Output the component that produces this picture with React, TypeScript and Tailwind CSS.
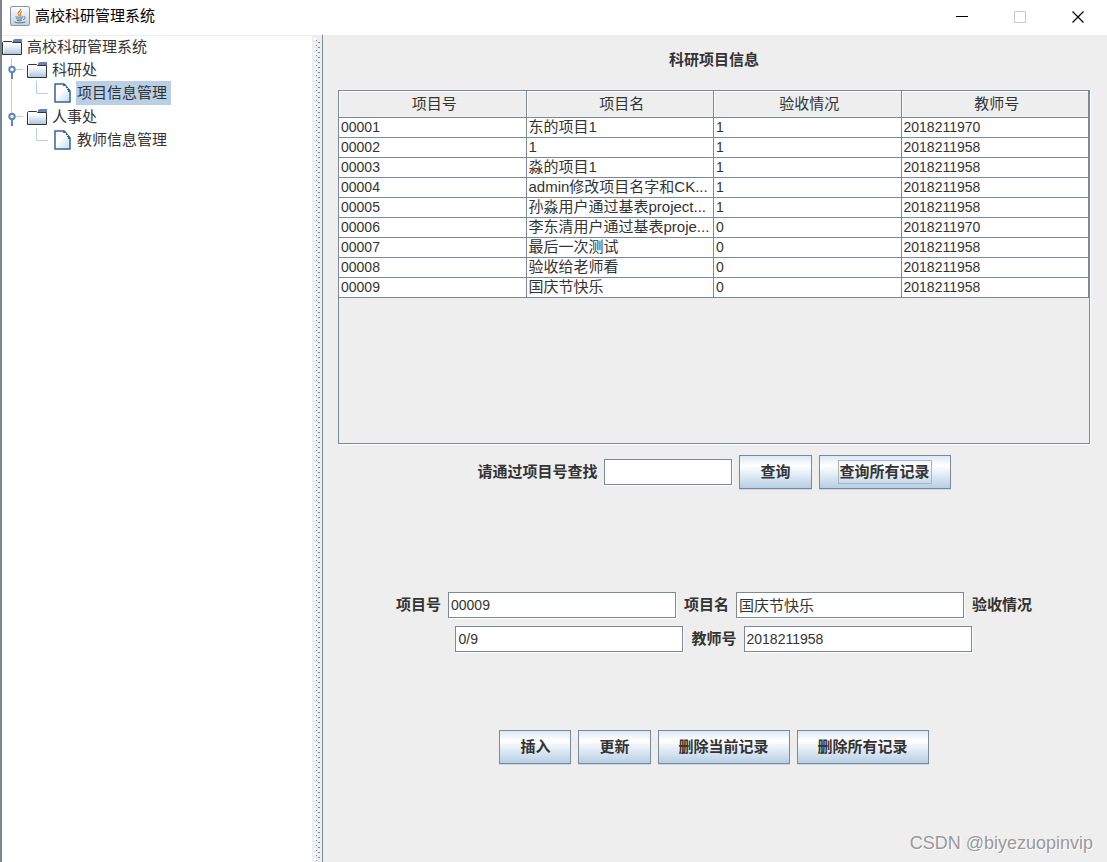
import { useState } from "react";

const projects = [
  { id: "00001", name: "东的项目1", accepted: "1", teacher: "2018211970" },
  { id: "00002", name: "1", accepted: "1", teacher: "2018211958" },
  { id: "00003", name: "淼的项目1", accepted: "1", teacher: "2018211958" },
  { id: "00004", name: "admin修改项目名字和CK...", accepted: "1", teacher: "2018211958" },
  { id: "00005", name: "孙淼用户通过基表project...", accepted: "1", teacher: "2018211958" },
  { id: "00006", name: "李东清用户通过基表proje...", accepted: "0", teacher: "2018211970" },
  { id: "00007", name: "最后一次测试", accepted: "0", teacher: "2018211958" },
  { id: "00008", name: "验收给老师看", accepted: "0", teacher: "2018211958" },
  { id: "00009", name: "国庆节快乐", accepted: "0", teacher: "2018211958" },
];

const columns = ["项目号", "项目名", "验收情况", "教师号"];

const JavaIcon = () => (
  <svg width="20" height="20" viewBox="0 0 20 20" fill="none">
    <defs>
      <linearGradient id="javaBg" x1="0" y1="0" x2="0" y2="1">
        <stop offset="0" stopColor="#fdfdfd" />
        <stop offset="1" stopColor="#c3d2de" />
      </linearGradient>
    </defs>
    <rect x="0.5" y="0.5" width="19" height="19" rx="1.5" fill="url(#javaBg)" stroke="#8797a5" />
    <path d="M10.6 3c.6 2-3 2.900-2.600 4.700.2 1 1.500 1.600 1.600 2.500M12 5.600c-1.600.9-2.200 1.600-1.500 2.500.6.800.3 1.500-.3 2" stroke="#e8862e" strokeWidth="1.200" />
    <path d="M5.500 10.800c2 .6 5.800.6 7.500 0M6.300 12.700c1.700.6 4.400.6 6 0M7 14.400c1.500.5 3.300.5 4.700 0M4.500 16c2.500 1.200 8.500 1.200 11-.2M13.500 10.800c2.300-.4 2.300 1.800-.3 2.700" stroke="#4d7897" />
  </svg>
);

const FolderIcon = () => (
  <svg className="shrink-0" width="20" height="17" viewBox="0 0 20 17">
    <defs>
      <linearGradient id="folderFill" x1="0" y1="0" x2="0" y2="1">
        <stop offset="0.2" stopColor="#ffffff" />
        <stop offset="1" stopColor="#a9c4e0" />
      </linearGradient>
    </defs>
    <path d="M0.500 16.500V4.500l1-1h8l1 1h9v12z" fill="url(#folderFill)" stroke="#333" />
    <path d="M11 4V2l2-1h7v3z" fill="#6382bf" />
    <path d="M1.500 15V5.500H9" fill="none" stroke="#fff" />
  </svg>
);

const FileIcon = () => (
  <svg className="shrink-0" width="17" height="20" viewBox="0 0 17 20">
    <defs>
      <linearGradient id="fileFill" x1="0" y1="0" x2="1" y2="1">
        <stop offset="0.4" stopColor="#ffffff" />
        <stop offset="1" stopColor="#c4d8ec" />
      </linearGradient>
    </defs>
    <path d="M1 1h9l6 7v11H1z" fill="url(#fileFill)" stroke="#336699" strokeWidth="1.500" />
    <path d="M9 1h2l5 6v2h-2v-2h-1v-2h-1V4h-1V3H9z" fill="#336699" />
    <path d="M11 3h1v1h-1zM13 5h1v1h-1z" fill="#dbe8f4" />
  </svg>
);

const GroupRow = ({ label, last }: { label: string; last?: boolean }) => (
  <div className="flex h-[23px] items-center">
    <svg className="shrink-0" width="25" height="23">
      <path d={last ? "M9.500 0V11M10 11.500H21" : "M9.500 0V23M10 11.500H21"} stroke="#b8cfe5" fill="none" />
      <path d="M9 14h2v7H9z" fill="#6382bf" />
      <circle cx="10" cy="11.500" r="2.700" fill="#fff" stroke="#6382bf" strokeWidth="2" />
    </svg>
    <FolderIcon />
    <span className="pl-[5px]">{label}</span>
  </div>
);

type LeafProps = { label: string; trunk?: boolean; selected: boolean; onSelect: () => void };

const LeafRow = ({ label, trunk, selected, onSelect }: LeafProps) => (
  <div className="flex h-6 items-center">
    <svg className="shrink-0" width="52" height="24">
      {trunk && <path d="M9.500 0V24" stroke="#b8cfe5" />}
      <path d="M34.500 0V12.500H46" stroke="#b8cfe5" fill="none" />
    </svg>
    <FileIcon />
    <button
      type="button"
      onClick={onSelect}
      className={selected ? "ml-[5px] h-6 bg-[#b8cfe5] pr-1 pl-px" : "ml-[5px] h-6 pr-1 pl-px"}
    >
      {label}
    </button>
  </div>
);

const Splitter = () => (
  <div className="relative w-[11px] shrink-0 border-r border-[#7a8a99] bg-[#eee]">
    <svg className="absolute inset-0 h-full w-full">
      <defs>
        <pattern id="bumps" width="10" height="5" patternUnits="userSpaceOnUse">
          <rect x="2" y="3" width="2" height="2" fill="#fff" />
          <rect x="4" y="0" width="1" height="1" fill="#7a8a99" />
          <rect x="6" y="2" width="2" height="1" fill="#7a8a99" />
        </pattern>
      </defs>
      <rect y="3" width="10" height="100%" fill="url(#bumps)" />
    </svg>
  </div>
);

const MetalButton = ({ text, focused }: { text: string; focused?: boolean }) => (
  <button
    type="button"
    className="flex h-[34px] items-center border border-[#7a8a99] bg-linear-to-b from-[#dde8f3] via-white via-30% to-[#b8cfe5] px-[18px] font-bold shadow-[0_1px_0_#c8d8e8]"
  >
    <span
      className={
        focused
          ? "flex h-6 items-center border border-[#a3b8cc] px-px"
          : "flex h-6 items-center px-[2px]"
      }
    >
      {text}
    </span>
  </button>
);

const fieldClass =
  "h-[26px] border border-[#7a8a99] bg-white px-[2px] text-[#333] shadow-[1px_1px_0_#fff] outline-none";

const App = () => {
  const [selected, setSelected] = useState("项目信息管理");

  return (
    <div className="flex min-h-screen flex-col border-l-2 border-[#7b858e] bg-white font-['Liberation_Sans','Noto_Sans_CJK_SC',sans-serif] text-[15px] leading-5 text-[#333]">
      <header className="flex h-[35px] shrink-0 items-center">
        <div className="flex flex-1 items-center gap-[5px] pb-[3px] pl-2 text-black">
          <JavaIcon />
          <h1>高校科研管理系统</h1>
        </div>
        <button type="button" aria-label="最小化" className="flex h-8 w-[58px] items-center justify-center pb-[2px]">
          <svg width="12" height="12"><path d="M0 5.500H12" stroke="#000" /></svg>
        </button>
        <button type="button" aria-label="最大化" disabled className="flex h-8 w-[58px] items-center justify-center pb-[2px]">
          <svg width="12" height="12"><rect x="0.500" y="0.500" width="11" height="11" fill="none" stroke="#ccc" /></svg>
        </button>
        <button type="button" aria-label="关闭" className="flex h-8 w-[58px] items-center justify-center pb-[2px]">
          <svg width="12" height="12"><path d="M0.500 0.500L11.500 11.500M11.500 0.500L0.500 11.500" stroke="#000" strokeWidth="1.200" /></svg>
        </button>
      </header>

      <div className="flex flex-1">
        <nav className="w-[310px] shrink-0 shadow-[inset_0_1px_0_#ededed]">
          <div className="flex h-[23px] items-center">
            <FolderIcon />
            <span className="pl-[5px]">高校科研管理系统</span>
          </div>
          <GroupRow label="科研处" />
          <LeafRow
            label="项目信息管理"
            trunk
            selected={selected === "项目信息管理"}
            onSelect={() => setSelected("项目信息管理")}
          />
          <GroupRow label="人事处" last />
          <LeafRow
            label="教师信息管理"
            selected={selected === "教师信息管理"}
            onSelect={() => setSelected("教师信息管理")}
          />
        </nav>

        <Splitter />

        <main className="relative min-w-0 flex-1 bg-[#eee] pr-[17px] pl-[15px]">
          <h2 className="pt-[15px] pb-5 text-center font-bold">科研项目信息</h2>

          <div className="min-h-[354px] border border-[#7a8a99] shadow-[1px_1px_0_#fff]">
            <table className="w-full table-fixed border-separate border-spacing-0">
              <thead>
                <tr>
                  {columns.map((c) => (
                    <th
                      key={c}
                      className="h-[27px] border-r border-b border-[#7a8a99] py-0 pr-0 pl-1 text-center font-normal shadow-[inset_1px_1px_0_#fff]"
                    >
                      {c}
                    </th>
                  ))}
                </tr>
              </thead>
              <tbody className="bg-white">
                {projects.map((p) => (
                  <tr key={p.id}>
                    <td className="h-5 border-r border-b border-[#7a8a99] px-[2px] py-0 text-sm leading-[19px]">{p.id}</td>
                    <td className="h-5 overflow-hidden border-r border-b border-[#7a8a99] px-[2px] pt-0 pb-[2px] leading-[17px] whitespace-nowrap">{p.name}</td>
                    <td className="h-5 border-r border-b border-[#7a8a99] px-[2px] py-0 text-sm leading-[19px]">{p.accepted}</td>
                    <td className="h-5 border-r border-b border-[#7a8a99] px-[2px] py-0 text-sm leading-[19px]">{p.teacher}</td>
                  </tr>
                ))}
              </tbody>
            </table>
          </div>

          <form className="mt-[11px] flex items-center justify-center gap-[7px]">
            <label htmlFor="search" className="font-bold">请通过项目号查找</label>
            <input id="search" className={`${fieldClass} w-32`} />
            <MetalButton text="查询" />
            <MetalButton text="查询所有记录" focused />
          </form>

          <form className="mt-[103px] flex flex-wrap items-center justify-center gap-x-[7px] gap-y-2">
            <label htmlFor="pid" className="font-bold">项目号</label>
            <input id="pid" defaultValue="00009" className={`${fieldClass} mr-px w-[228px] text-sm`} />
            <label htmlFor="pname" className="font-bold">项目名</label>
            <input id="pname" defaultValue="国庆节快乐" className={`${fieldClass} mr-px w-[228px] pb-[2px]`} />
            <label htmlFor="accepted" className="font-bold">验收情况</label>
            <input id="accepted" defaultValue="0/9" className={`${fieldClass} mr-px w-[228px] text-sm`} />
            <label htmlFor="teacher" className="font-bold">教师号</label>
            <input id="teacher" defaultValue="2018211958" className={`${fieldClass} mr-px w-[228px] text-sm`} />
          </form>

          <div className="mt-[78px] flex justify-center gap-[7px]">
            <MetalButton text="插入" />
            <MetalButton text="更新" />
            <MetalButton text="删除当前记录" />
            <MetalButton text="删除所有记录" />
          </div>

          <p className="absolute right-[14px] bottom-[9px] text-lg leading-5 text-[#999] [text-shadow:1px_1px_0_#fff]">
            CSDN @biyezuopinvip
          </p>
        </main>
      </div>
    </div>
  );
};

export default App;
